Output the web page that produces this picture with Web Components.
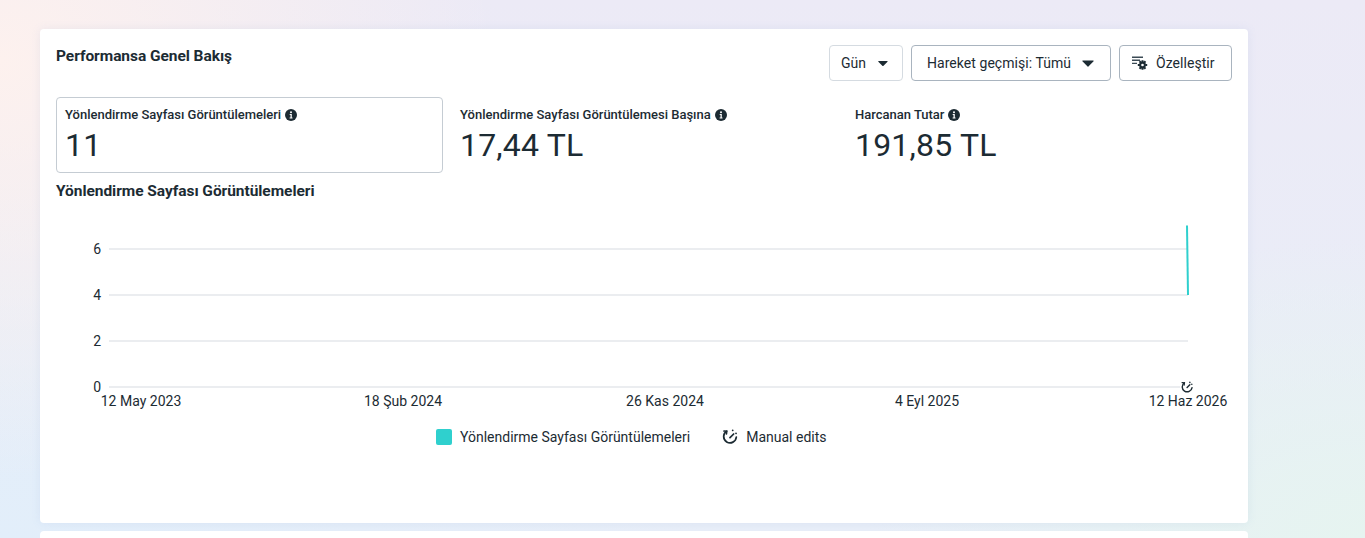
<!DOCTYPE html>
<html lang="tr"><head><meta charset="utf-8"><title>Performans</title>
<style>
html,body{margin:0;height:538px;overflow:hidden}
body{font-family:Roboto,"Noto Sans",sans-serif;color:#1c2b33;
background:radial-gradient(ellipse 500px 420px at 0 60px,#fdf1ee 0,rgba(253,241,238,0) 100%),radial-gradient(ellipse 700px 420px at 0 538px,#e2eefa 0,rgba(226,238,250,0) 100%),radial-gradient(ellipse 500px 300px at 1365px 538px,#e6f4f0 0,rgba(230,244,240,0) 100%),linear-gradient(#eceaf6,#e8eef8)}
</style></head><body>
<template id="tb"><style>
:host{display:inline-flex;align-items:center;box-sizing:border-box;height:36px;border:1px solid #a9b4bf;border-radius:4px;background:#fff;font-size:14px;color:#1c2b33;white-space:nowrap;letter-spacing:.05px}
:host([light]){border-color:#d5dbe1}
</style><slot></slot></template>
<perf-page>
<perf-card>
<div slot="title">Performansa Genel Bakış</div>
<tool-button slot="tools" light style="padding:0 14px 0 11px;gap:12px;width:74px">Gün <svg width="12" height="7" viewBox="0 0 12 7"><path d="M.8.5h10.4a.5.5 0 0 1 .4.8L6.4 6.5a.6.6 0 0 1-.8 0L.4 1.3a.5.5 0 0 1 .4-.8z" fill="#1c2b33"/></svg></tool-button>
<tool-button slot="tools" style="padding:0 14px 0 15px;gap:11px;width:200px">Hareket geçmişi: Tümü <svg width="12" height="7" viewBox="0 0 12 7"><path d="M.8.5h10.4a.5.5 0 0 1 .4.8L6.4 6.5a.6.6 0 0 1-.8 0L.4 1.3a.5.5 0 0 1 .4-.8z" fill="#1c2b33"/></svg></tool-button>
<tool-button slot="tools" style="padding:0 14px 0 12px;gap:8px;width:113px"><svg width="16" height="16" viewBox="0 0 16 16"><path d="M0 1.5h11v1.4H0zM0 4.6h8v1.4H0zM0 7.7h5v1.4H0z" fill="#3b4b55"/><g fill="#1c2b33"><circle cx="10.5" cy="10" r="3.4"/><path d="M9.5 5.2h2v2h-2zM9.5 12.8h2v2h-2zM5.8 9h2v2h-2zM13.2 9h2v2h-2zM6.8 6.9l1.4-1.4 1.4 1.4-1.4 1.4zM11.4 6.9l1.4-1.4 1.4 1.4-1.4 1.4zM6.8 13.1l1.4-1.4 1.4 1.4-1.4 1.4zM11.4 13.1l1.4-1.4 1.4 1.4-1.4 1.4z"/></g><circle cx="10.5" cy="10" r="1.3" fill="#fff"/></svg>Özelleştir</tool-button>
<metric-box slot="metrics" selected label="Yönlendirme Sayfası Görüntülemeleri" value="11"></metric-box>
<metric-box slot="metrics" label="Yönlendirme Sayfası Görüntülemesi Başına" value="17,44 TL"></metric-box>
<metric-box slot="metrics" label="Harcanan Tutar" value="191,85 TL"></metric-box>
<div slot="subtitle">Yönlendirme Sayfası Görüntülemeleri</div>
<line-chart slot="chart"></line-chart>
</perf-card>
<next-card></next-card>
</perf-page>
<script>
const def=(n,html,fn)=>customElements.define(n,class extends HTMLElement{connectedCallback(){if(this.shadowRoot)return;const s=this.attachShadow({mode:'open'});s.innerHTML=typeof html==='function'?html(this):html;}});
customElements.define('tool-button',class extends HTMLElement{constructor(){super();this.attachShadow({mode:'open'}).append(document.getElementById('tb').content.cloneNode(true))}});
def('perf-page',`<style>:host{display:flex;flex-direction:column;gap:8px;padding:29px 117px 0 40px;height:538px;box-sizing:border-box;overflow:hidden}</style><slot></slot>`);
def('perf-card',`<style>
:host{display:block;flex:none;box-sizing:border-box;height:494px;background:#fff;border-radius:4px;padding:16px 16px 0;box-shadow:0 0 10px rgba(120,160,210,.12)}
.top{display:flex;justify-content:space-between;align-items:flex-start}
::slotted([slot=title]){font-size:15.5px;font-weight:700;line-height:22px;margin-top:0;letter-spacing:-.05px}
.tools{display:flex;gap:8px;margin-right:0}
.m{display:grid;grid-template-columns:repeat(3,395px);margin-top:16px;height:76px}
::slotted([slot=subtitle]){font-size:15.5px;font-weight:700;line-height:22px;margin-top:7px;letter-spacing:-.05px}
</style><div class="top"><slot name="title"></slot><div class="tools"><slot name="tools"></slot></div></div>
<div class="m"><slot name="metrics"></slot></div><slot name="subtitle"></slot><slot name="chart"></slot>`);
const info=`<svg width="12" height="12" viewBox="0 0 12 12" style="flex:none"><circle cx="6" cy="6" r="6" fill="#1c2b33"/><circle cx="6" cy="3.2" r="1" fill="#fff"/><path d="M4.7 5h2.1v3.6h.7v1H4.6v-1h.9V6h-.8z" fill="#fff"/></svg>`;
def('metric-box',t=>`<style>
:host{display:block;box-sizing:border-box;width:387px;height:76px;padding:8px 8px;border:1px solid transparent;border-radius:4px}
:host([selected]){border-color:#c5ccd3}
.l{display:flex;align-items:center;gap:4px;font-size:13px;font-weight:500;line-height:18px;white-space:nowrap}
.v{font-size:32px;line-height:38px;letter-spacing:.2px;margin-top:2px;white-space:nowrap}
</style><div class="l">${t.getAttribute('label')}${info}</div><div class="v">${t.getAttribute('value')}</div>`);
const ax=(x,y,a,s)=>`<text x="${x}" y="${y}" text-anchor="${a}">${s}</text>`;
def('line-chart',`<style>:host{display:block;margin-top:0}svg{display:block}text{font-size:14px;fill:#1c2b33}
.leg{display:flex;align-items:center;font-size:14px;margin-top:12px;margin-left:380px;height:20px;white-space:nowrap}
.sw{width:16px;height:16px;background:#2fd0ce;border-radius:2px;margin-right:8px}
</style>
<svg width="1176" height="213" viewBox="56 201 1176 213">
<g stroke="#ebedf0" stroke-width="2" fill="none"><path d="M109 248H1188M109 294H1188M109 340H1188M109 386H1180"/></g>
<path d="M1187 224.5L1188 294" stroke="#2fd0ce" stroke-width="2" fill="none"/>
<g>${ax(101,253,'end','6')}${ax(101,299,'end','4')}${ax(101,345,'end','2')}${ax(101,391,'end','0')}
${ax(141,405,'middle','12 May 2023')}${ax(403,405,'middle','18 Şub 2024')}${ax(665,405,'middle','26 Kas 2024')}${ax(927,405,'middle','4 Eyl 2025')}${ax(1188,405,'middle','12 Haz 2026')}</g>
<g transform="translate(1180.5 380) scale(.55)" fill="none" stroke="#1c2b33" stroke-width="2.6" stroke-linecap="round"><path d="M7 3.2A9 9 0 1 0 21 12"/><path d="M3 3l4 .3-.4 4"/><path d="M12 12l5-5"/><path d="M17 2.5l.1.1M20.500 6l.1.1"/></g>
</svg>
<div class="leg"><span class="sw"></span>Yönlendirme Sayfası Görüntülemeleri<svg style="margin:0 8px 0 32px" width="16" height="16" viewBox="0 0 24 24" fill="none" stroke="#1c2b33" stroke-width="2.6" stroke-linecap="round"><path d="M7 3.200A9.500 9.500 0 1 0 21.500 12"/><path d="M3 3l4 .3-.4 4"/><path d="M12 13l5.500-5.500"/><path d="M16 2l.1.1M21 6.500l.1.1"/></svg>Manual edits</div>`);
def('next-card',`<style>:host{display:block;flex:none;height:60px;background:#fff;border-radius:4px}</style>`);
</script>
</body></html>
